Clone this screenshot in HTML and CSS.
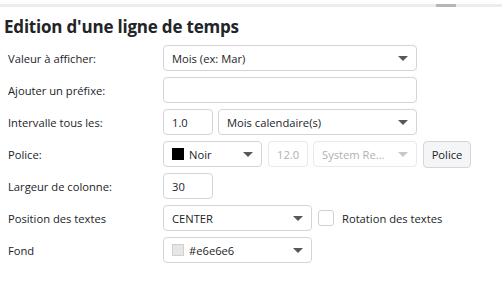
FILE: index.html
```html
<!DOCTYPE html>
<html lang="fr">
<head>
<meta charset="utf-8">
<link rel="stylesheet" href="styles.css">
</head>
<body>
<div class="scrollbar"><div class="thumb"></div></div>
<h1 class="title">Edition d'une ligne de temps</h1>
<div class="form">
  <div class="row">
    <div class="label">Valeur à afficher:</div>
    <div class="ctl select w254"><span class="val">Mois (ex: Mar)</span><span class="arrow"></span></div>
  </div>
  <div class="row">
    <div class="label">Ajouter un préfixe:</div>
    <div class="ctl input w254"></div>
  </div>
  <div class="row">
    <div class="label">Intervalle tous les:</div>
    <div class="ctl input w50"><span class="val">1.0</span></div>
    <div class="ctl select w199 gap5"><span class="val">Mois calendaire(s)</span><span class="arrow"></span></div>
  </div>
  <div class="row">
    <div class="label">Police:</div>
    <div class="ctl select w99"><span class="swatch black"></span><span class="val">Noir</span><span class="arrow"></span></div>
    <div class="ctl input w40 gap6 disabled"><span class="val">12.0</span></div>
    <div class="ctl select w104 gap5 disabled"><span class="val">System Re...</span><span class="arrow"></span></div>
    <div class="btn gap6">Police</div>
  </div>
  <div class="row">
    <div class="label">Largeur de colonne:</div>
    <div class="ctl input w50"><span class="val">30</span></div>
  </div>
  <div class="row">
    <div class="label">Position des textes</div>
    <div class="ctl select w149"><span class="val">CENTER</span><span class="arrow"></span></div>
    <div class="check gap6"><span class="box"></span><span class="check-label">Rotation des textes</span></div>
  </div>
  <div class="row">
    <div class="label">Fond</div>
    <div class="ctl select w149"><span class="swatch grey"></span><span class="val">#e6e6e6</span><span class="arrow"></span></div>
  </div>
</div>
</body>
</html>
```
FILE: styles.css
```css
html, body {
  margin: 0;
  padding: 0;
  background: #ffffff;
  font-family: "Open Sans", "Noto Sans", sans-serif;
  color: #222428;
}
.scrollbar {
  margin-top: 4px;
  height: 3px;
  background: #ededed;
  display: flex;
}
.thumb {
  margin-left: 436px;
  width: 20px;
  height: 3px;
  background: #b3b6ba;
}
.title {
  margin: 0;
  padding: 8px 0 0 4px;
  font-size: 17px;
  font-weight: 700;
  line-height: 23px;
  letter-spacing: -0.2px;
}
.form {
  display: flex;
  flex-direction: column;
  gap: 6px;
  padding-top: 7px;
}
.row {
  display: flex;
  align-items: center;
  height: 26px;
}
.label {
  width: 155px;
  padding-left: 8px;
  font-size: 11.2px;
}
.ctl {
  box-sizing: border-box;
  height: 26px;
  border: 1px solid #d4d3dc;
  border-radius: 4px;
  display: flex;
  align-items: center;
  padding: 0 8px;
  font-size: 11.2px;
  background: #fff;
}
.val { flex: 1; white-space: nowrap; }
.arrow {
  width: 0;
  height: 0;
  border-left: 5px solid transparent;
  border-right: 5px solid transparent;
  border-top: 5px solid #55585e;
}
.disabled { border-color: #e8e8ee; color: #b0b0b4; }
.disabled .arrow { border-top-color: #c8c8cc; }
.w254 { width: 254px; }
.w199 { width: 199px; }
.w149 { width: 149px; }
.w104 { width: 104px; }
.w99 { width: 99px; }
.w50 { width: 50px; }
.w40 { width: 40px; }
.gap5 { margin-left: 5px; }
.gap6 { margin-left: 6px; }
.swatch {
  box-sizing: border-box;
  width: 12px;
  height: 12px;
  margin-right: 5px;
  flex: none;
}
.black { background: #000; }
.grey { background: #e6e6e6; border: 1px solid #d0d0d0; }
.btn {
  box-sizing: border-box;
  height: 27px;
  width: 48px;
  border: 1px solid #d4d6dc;
  border-radius: 4px;
  background: #f4f5f7;
  font-size: 11.2px;
  display: flex;
  align-items: center;
  justify-content: center;
}
.check { display: flex; align-items: center; }
.box {
  box-sizing: border-box;
  width: 16px;
  height: 16px;
  border: 1px solid #cfcfd6;
  border-radius: 3px;
  margin-right: 8px;
}
.check-label { font-size: 11.2px; }
```
